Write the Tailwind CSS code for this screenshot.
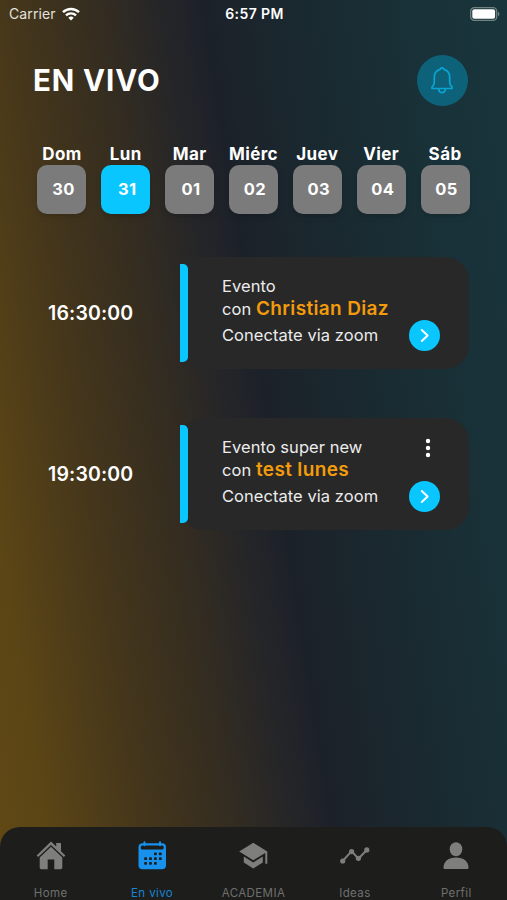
<!DOCTYPE html>
<html lang="es">

<head>
	<meta charset="UTF-8">
	<meta name="viewport" content="width=device-width, initial-scale=1.0">
	<script src="https://cdn.jsdelivr.net/npm/@tailwindcss/browser@4"></script>
	<title>En vivo</title>
</head>

<body class="flex flex-col h-screen overflow-hidden text-white font-['Inter',sans-serif] bg-[linear-gradient(81deg,#614914_0%,#5b4516_9%,#46371b_23%,#352d20_36%,#262628_46%,#1c2129_53%,#1a2930_68%,#193138_85%,#19353c_100%)]">
	<!-- Status bar -->
	<div class="grid grid-cols-3 items-center h-[27px] pl-[9px] pr-[7px] text-[14px]">
		<div class="flex items-center gap-[6px] text-[#e3e1dd]">
			<span class="tracking-[0.1px]">Carrier</span>
			<svg class="w-[18px] h-[14px]" viewBox="0 0 18 14" fill="none" stroke="#fff" stroke-width="2.4">
				<path d="M1 5.2a11.5 11.5 0 0 1 16 0M4 8.4a7.2 7.2 0 0 1 10 0" />
				<path d="M9 13.6l-2.7-2.8a3.9 3.9 0 0 1 5.4 0z" fill="#fff" stroke="none" />
			</svg>
		</div>
		<span class="text-center font-semibold text-[14px] tracking-[0.4px]">6:57 PM</span>
		<svg class="justify-self-end w-[30px] h-[14px]" viewBox="0 0 30 14">
			<rect x=".7" y=".7" width="26" height="12.6" rx="3.6" fill="none" stroke="#71827f" stroke-width="1.3" />
			<rect x="2.3" y="2.3" width="22.8" height="9.4" rx="2" fill="#fff" />
			<path d="M28 4.8c2 .8 2 3.6 0 4.4z" fill="#71827f" />
		</svg>
	</div>

	<!-- Header -->
	<div class="flex items-center justify-between mt-[27px] h-[52px] pl-[33px] pr-[39px]">
		<h1 class="text-[29.5px] font-bold tracking-[0.9px]">EN VIVO</h1>
		<div class="flex items-center justify-center w-[51px] h-[51px] rounded-full bg-[#0d627a]">
			<svg class="w-6 h-7 mr-px" viewBox="0 0 24 28" fill="none" stroke="#0ba5d1" stroke-width="1.7" stroke-linejoin="round">
				<path d="M10 3.4a2.100 2.100 0 0 1 4 0c3.700 1.200 5.700 4 5.700 7.800v5.300c0 2 .7 3 2.300 4.600v1.400H2v-1.400c1.600-1.600 2.300-2.600 2.300-4.600v-5.300c0-3.800 2-6.600 5.700-7.800z" />
				<path d="M8.700 22.500v.9a3.300 3.300 0 0 0 6.600 0v-.9" />
			</svg>
		</div>
	</div>

	<!-- Week -->
	<div class="grid grid-cols-7 mt-[37px] ml-[30px] mr-[30px] text-center font-bold text-[17px] tracking-[0.4px]">
		<div class="flex flex-col items-center">
			<span class="h-[22px] leading-[22px]">Dom</span>
			<div class="w-[49px] h-[49px] rounded-[10px] bg-[#7b7b7b] shadow-md leading-[49px] pl-[3px] text-[16.500px]">30</div>
		</div>
		<div class="flex flex-col items-center">
			<span class="h-[22px] leading-[22px]">Lun</span>
			<div class="w-[49px] h-[49px] rounded-[10px] bg-[#0ac6ff] shadow-md leading-[49px] pl-[3px] text-[16.500px]">31</div>
		</div>
		<div class="flex flex-col items-center">
			<span class="h-[22px] leading-[22px]">Mar</span>
			<div class="w-[49px] h-[49px] rounded-[10px] bg-[#7b7b7b] shadow-md leading-[49px] pl-[3px] text-[16.500px]">01</div>
		</div>
		<div class="flex flex-col items-center">
			<span class="h-[22px] leading-[22px]">Miérc</span>
			<div class="w-[49px] h-[49px] rounded-[10px] bg-[#7b7b7b] shadow-md leading-[49px] pl-[3px] text-[16.500px]">02</div>
		</div>
		<div class="flex flex-col items-center">
			<span class="h-[22px] leading-[22px]">Juev</span>
			<div class="w-[49px] h-[49px] rounded-[10px] bg-[#7b7b7b] shadow-md leading-[49px] pl-[3px] text-[16.500px]">03</div>
		</div>
		<div class="flex flex-col items-center">
			<span class="h-[22px] leading-[22px]">Vier</span>
			<div class="w-[49px] h-[49px] rounded-[10px] bg-[#7b7b7b] shadow-md leading-[49px] pl-[3px] text-[16.500px]">04</div>
		</div>
		<div class="flex flex-col items-center">
			<span class="h-[22px] leading-[22px]">Sáb</span>
			<div class="w-[49px] h-[49px] rounded-[10px] bg-[#7b7b7b] shadow-md leading-[49px] pl-[3px] text-[16.500px]">05</div>
		</div>
	</div>

	<!-- Events -->
	<div class="flex flex-col gap-[49px] mt-[43px] pr-[38px]">
		<div class="flex items-center h-[112px]">
			<span class="w-[180px] pl-[48px] pt-px text-[19.500px] font-semibold tracking-[0.15px]">16:30:00</span>
			<div class="flex flex-1 items-center h-full rounded-[24px] bg-[#282828]">
				<div class="w-2 h-[98px] rounded-r-[5px] bg-[#0ac6ff]"></div>
				<div class="flex-1 h-full pl-[34px] pt-[18px] text-[16.500px] tracking-[0.05px] text-[#ececec]">
					<p class="h-[21px] leading-[22px]">Evento</p>
					<p class="h-[26px] leading-[25px]">con <span class="text-[19px] font-semibold tracking-[0.35px] text-[#f29b0c]">Christian Diaz</span></p>
					<p class="h-[27px] leading-[27px]">Conectate via zoom</p>
				</div>
				<div class="flex flex-col justify-end items-center w-[31px] h-full mr-[29px] pb-[18px]">
					<svg class="w-[31px] h-[31px]" viewBox="0 0 31 31" fill="none">
						<circle cx="15.500" cy="15.500" r="15.500" fill="#0ac6ff" />
						<path d="M12.800 10l5.800 5.500-5.800 5.500" stroke="#fff" stroke-width="2" stroke-linecap="round" stroke-linejoin="round" />
					</svg>
				</div>
			</div>
		</div>
		<div class="flex items-center h-[112px]">
			<span class="w-[180px] pl-[48px] pt-px text-[19.500px] font-semibold tracking-[0.15px]">19:30:00</span>
			<div class="flex flex-1 items-center h-full rounded-[24px] bg-[#282828]">
				<div class="w-2 h-[98px] rounded-r-[5px] bg-[#0ac6ff]"></div>
				<div class="flex-1 h-full pl-[34px] pt-[18px] text-[16.500px] tracking-[0.05px] text-[#ececec]">
					<p class="h-[21px] leading-[22px]">Evento super new</p>
					<p class="h-[26px] leading-[25px]">con <span class="text-[19px] font-semibold tracking-[0.35px] text-[#f29b0c]">test lunes</span></p>
					<p class="h-[27px] leading-[27px]">Conectate via zoom</p>
				</div>
				<div class="flex flex-col justify-between items-center w-[31px] h-full mr-[29px] pt-[20px] pb-[18px]">
					<svg class="w-[6px] h-5 ml-[7px]" viewBox="0 0 6 20" fill="#fff">
						<circle cx="3" cy="3" r="2.200" />
						<circle cx="3" cy="10" r="2.200" />
						<circle cx="3" cy="17" r="2.200" />
					</svg>
					<svg class="w-[31px] h-[31px]" viewBox="0 0 31 31" fill="none">
						<circle cx="15.500" cy="15.500" r="15.500" fill="#0ac6ff" />
						<path d="M12.800 10l5.800 5.500-5.800 5.500" stroke="#fff" stroke-width="2" stroke-linecap="round" stroke-linejoin="round" />
					</svg>
				</div>
			</div>
		</div>
	</div>

	<!-- Tab bar -->
	<div class="grid grid-cols-5 mt-auto h-[73px] pt-[14px] rounded-t-[20px] bg-[#1d1d1b] text-[11.500px] tracking-[0.4px] text-[#70706f]">
		<div class="flex flex-col items-center">
			<svg class="w-[30px] h-[30px] shrink-0" viewBox="0 0 30 30" fill="#7e7e7d">
				<path d="M15 .6L.6 14.400l1.600 1.700L15 3.900l12.800 12.200 1.600-1.700-4.400-4.200V2h-4.800v3.600z" />
				<path d="M15 5.800L3.700 16.600v9.900c0 1 .6 1.700 1.600 1.700h6.400v-9.700h6.600v9.700h6.400c1 0 1.600-.7 1.600-1.700v-9.900z" />
			</svg>
			<span class="mt-[14px] leading-[16px]">Home</span>
		</div>
		<div class="flex flex-col items-center text-[#1785d6]">
			<svg class="w-[30px] h-[30px] shrink-0" viewBox="0 0 30 30">
				<rect x="1.500" y="2.300" width="27.500" height="25.900" rx="4" fill="#1791ec" />
				<rect x="3.800" y="4.600" width="22.900" height="3.800" rx="1.500" fill="#1d1d1b" />
				<path d="M7.500 1.200v3M23 1.200v3" stroke="#1791ec" stroke-width="2" stroke-linecap="round" />
				<g fill="#1d1d1b">
					<rect x="17" y="11.500" width="2.800" height="2.800" rx=".7" />
					<rect x="21.900" y="11.500" width="2.800" height="2.800" rx=".7" />
					<rect x="7.200" y="16.300" width="2.800" height="2.800" rx=".7" />
					<rect x="12.100" y="16.300" width="2.800" height="2.800" rx=".7" />
					<rect x="17" y="16.300" width="2.800" height="2.800" rx=".7" />
					<rect x="21.900" y="16.300" width="2.800" height="2.800" rx=".7" />
					<rect x="7.200" y="21" width="2.800" height="2.800" rx=".7" />
					<rect x="12.100" y="21" width="2.800" height="2.800" rx=".7" />
					<rect x="17" y="21" width="2.800" height="2.800" rx=".7" />
				</g>
			</svg>
			<span class="mt-[14px] leading-[16px]">En vivo</span>
		</div>
		<div class="flex flex-col items-center">
			<svg class="w-[30px] h-[30px] shrink-0" viewBox="0 0 30 30" fill="#7e7e7d">
				<path d="M15.300 1.800L1.200 10.600l14.100 8.700 12-7.300v10.800h2V10.400z" />
				<path d="M5.800 15.500v6l9.500 6 9.500-6v-6l-9.500 6z" />
			</svg>
			<span class="mt-[14px] leading-[16px]">ACADEMIA</span>
		</div>
		<div class="flex flex-col items-center">
			<svg class="w-[30px] h-[30px] shrink-0" viewBox="0 0 30 30" fill="#7e7e7d">
				<path d="M2.700 20l8.900-9.800 6.800 7.500 8.600-9" fill="none" stroke="#7e7e7d" stroke-width="2" />
				<circle cx="2.700" cy="20" r="2.600" />
				<circle cx="11.600" cy="10.600" r="2.600" />
				<circle cx="18.400" cy="17.300" r="2.600" />
				<circle cx="26.800" cy="8.900" r="2.600" />
			</svg>
			<span class="mt-[14px] leading-[16px]">Ideas</span>
		</div>
		<div class="flex flex-col items-center">
			<svg class="w-[30px] h-[30px] shrink-0" viewBox="0 0 30 30" fill="#7e7e7d">
				<ellipse cx="15" cy="8.200" rx="6.300" ry="7" />
				<path d="M2.500 26.500c0-6 5-10 12.500-10s12.500 4 12.500 10c0 1-.5 1.500-1.500 1.500H4c-1 0-1.500-.5-1.500-1.500z" />
			</svg>
			<span class="mt-[14px] leading-[16px]">Perfil</span>
		</div>
	</div>
</body>

</html>
